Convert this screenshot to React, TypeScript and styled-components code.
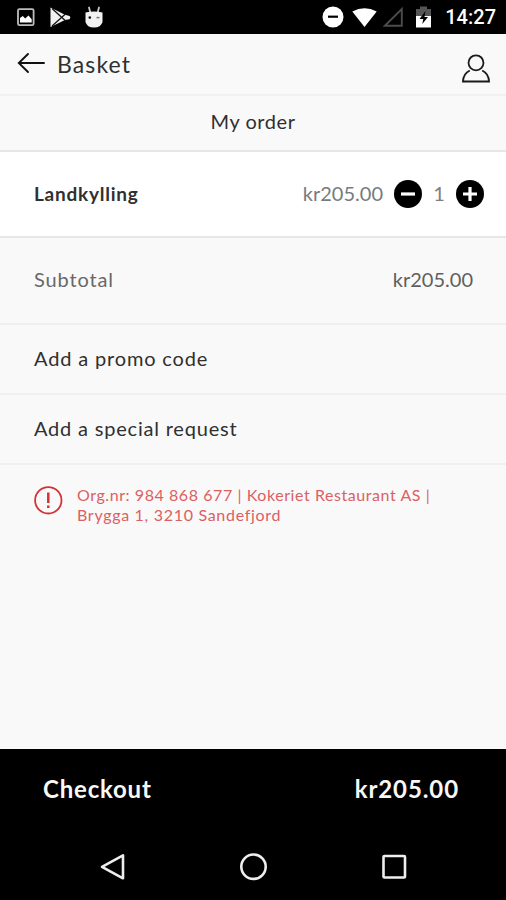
import React from "react";
import styled, { createGlobalStyle } from "styled-components";

const GlobalStyle = createGlobalStyle`
  * { box-sizing: border-box; }
  body { margin: 0; background: #f9f9f9; }
`;

const Screen = styled.div`
  width: 506px;
  height: 900px;
  display: flex;
  flex-direction: column;
  background: #f9f9f9;
  color: #303030;
  font-family: Lato, "Open Sans", sans-serif;
  overflow: hidden;
`;

const StatusBar = styled.div`
  height: 34px;
  flex: none;
  display: flex;
  align-items: center;
  justify-content: space-between;
  background: #000;
  padding: 0 10px 0 16px;
`;

const Notifications = styled.div`
  display: flex;
  align-items: center;
  gap: 14px;
  padding-bottom: 1px;
`;

const Indicators = styled.div`
  display: flex;
  align-items: center;
`;

const Clock = styled.span`
  margin: 1px 0 0 14px;
  color: #fff;
  font: 500 20px/33px Roboto, sans-serif;
`;

const Icon = styled.svg`
  display: block;
  flex: none;
`;

const Wifi = styled(Icon)`
  margin: 0 6px 0 8px;
`;

const Battery = styled(Icon)`
  margin-left: 13px;
`;

const Header = styled.header`
  height: 62px;
  flex: none;
  display: flex;
  align-items: center;
  padding: 0 15px 2px 17px;
  border-bottom: 2px solid #f1f1f1;
`;

const IconButton = styled.button`
  border: 0;
  padding: 0;
  background: none;
`;

const AccountButton = styled(IconButton)`
  margin-left: auto;
  padding-top: 11px;
`;

const Label = styled.span<{ $size?: number; $spacing?: number; $weight?: number; $color?: string }>`
  font-size: ${(p) => p.$size ?? 20}px;
  letter-spacing: ${(p) => p.$spacing ?? 0}px;
  font-weight: ${(p) => p.$weight ?? 400};
  color: ${(p) => p.$color ?? "inherit"};
  line-height: 28px;
  white-space: nowrap;
`;

const Title = styled(Label)`
  margin: 1px 0 0 12px;
`;

const SectionTitle = styled.div`
  height: 56px;
  flex: none;
  display: flex;
  justify-content: center;
  align-items: center;
  padding-bottom: 4px;
  border-bottom: 2px solid #e7e7e7;
`;

const Row = styled.div<{ $height: number; $lift?: number }>`
  height: ${(p) => p.$height}px;
  flex: none;
  display: flex;
  align-items: center;
  justify-content: space-between;
  padding: 0 33px ${(p) => p.$lift ?? 2}px 34px;
  border-bottom: 2px solid #f0f0f0;
`;

const ItemRow = styled(Row)`
  padding: 0 22px 0 34px;
  background: #fff;
  border-bottom-color: #e7e7e7;
`;

const Stepper = styled.div`
  display: flex;
  align-items: center;
`;

const Price = styled(Label)`
  margin-right: 11px;
  padding-bottom: 2px;
`;

const Quantity = styled(Label)`
  width: 34px;
  padding-bottom: 2px;
  text-align: center;
`;

const RoundButton = styled.button`
  border: 0;
  padding: 0;
  width: 28px;
  height: 28px;
  border-radius: 50%;
  background: #000;
`;

const Notice = styled.div`
  display: flex;
  flex: 1;
  align-items: flex-start;
  padding: 20px 34px 0;
  gap: 14px;
  color: #dc6063;
`;

const NoticeText = styled.p`
  margin: 0;
  font-size: 16px;
  line-height: 20px;
  white-space: nowrap;
`;

const NoticeLine = styled.span<{ $spacing: number }>`
  display: block;
  letter-spacing: ${(p) => p.$spacing}px;
`;

const Checkout = styled.div`
  height: 84px;
  flex: none;
  display: flex;
  justify-content: space-between;
  align-items: center;
  padding: 0 47px 4px 43px;
  background: #000;
  color: #f8f8f8;
`;

const NavBar = styled.nav`
  height: 67px;
  flex: none;
  display: flex;
  justify-content: center;
  gap: 112px;
  align-items: center;
  background: #000;
`;

export default function App() {
  return (
    <Screen>
      <GlobalStyle />
      <StatusBar>
        <Notifications>
          <Icon width="20" height="22" viewBox="0 0 20 22">
            <rect x="2" y="3.2" width="15.6" height="16" rx="1.5" fill="none" stroke="#bdbdbd" strokeWidth="1.8" />
            <path d="M4 16.5V12l2.8-2 2.4 2.4 3.3-2.9 3.2 3.7v3.3z" fill="#fff" />
          </Icon>
          <Icon width="21" height="22" viewBox="0 0 21 22">
            <path d="M.5 1.5 15 8.8l4.5 1.2q1.6 1.6 0 3.2L15 14 .5 21z" fill="#f2f2f2" />
            <path d="M2 2.5 16 15.2M2 20 16 7.6" stroke="#111" strokeWidth="1.3" />
          </Icon>
          <Icon width="18" height="24" viewBox="0 0 18 24">
            <path d="M4 2.5 5.2 7M14 2.5 12.8 7" stroke="#ccc" strokeWidth="1.8" strokeLinecap="round" />
            <path d="M.5 7.5Q9 5.5 17.5 7.500V17Q16 22.5 9 22.5T.5 17z" fill="#f1f1f1" />
            <circle cx="4.8" cy="12.6" r="1.3" fill="#111" />
            <path d="M11.5 12.6h3" stroke="#777" strokeWidth="1.5" />
          </Icon>
        </Notifications>
        <Indicators>
          <Icon width="22" height="22" viewBox="0 0 22 22">
            <circle cx="11" cy="11" r="10.5" fill="#fff" />
            <path d="M6 10.7h10" stroke="#000" strokeWidth="2.2" />
          </Icon>
          <Wifi width="25" height="22" viewBox="0 0 25 22">
            <path d="M.3 5.500Q12.500-1 24.700 5.500L12.500 21z" fill="#fff" />
          </Wifi>
          <Icon width="20" height="22" viewBox="0 0 20 22">
            <path d="M18.800 3v16.700H1.800z" fill="none" stroke="#4c4c4c" strokeWidth="1.9" />
          </Icon>
          <Battery width="15" height="22" viewBox="0 0 15 22">
            <path d="M0 3h4V.5h7V3h4v7H0z" fill="#555" />
            <path d="M0 10h15v11.500H0z" fill="#fff" />
            <path d="M9.500 5 3.500 13h3.800l-1 5L12 11H8.500z" fill="#000" />
          </Battery>
          <Clock>14:27</Clock>
        </Indicators>
      </StatusBar>

      <Header>
        <IconButton aria-label="Back">
          <Icon width="28" height="22" viewBox="0 0 28 22">
            <path d="M27 11H2M11 2 1.800 11 11 20" fill="none" stroke="#111" strokeWidth="1.9" strokeLinecap="round" />
          </Icon>
        </IconButton>
        <Title $size={23} $spacing={1.1}>Basket</Title>
        <AccountButton aria-label="Account">
          <Icon width="30" height="30" viewBox="0 0 30 30">
            <circle cx="15" cy="8.800" r="7.500" fill="none" stroke="#1b1b1b" strokeWidth="1.8" />
            <path d="M8.800 16.500C4.500 18.500 2.200 22.500 2 27.500H28C27.800 22.500 25.500 18.500 21.200 16.500" fill="none" stroke="#1b1b1b" strokeWidth="1.9" />
          </Icon>
        </AccountButton>
      </Header>

      <SectionTitle><Label $spacing={0.55}>My order</Label></SectionTitle>

      <ItemRow $height={86}>
        <Label $weight={700} $size={19} $spacing={0.75}>Landkylling</Label>
        <Stepper>
          <Price $color="#777b80">kr205.00</Price>
          <RoundButton aria-label="Remove one">
            <Icon width="28" height="28" viewBox="0 0 28 28">
              <path d="M7 14h14" stroke="#fff" strokeWidth="3.2" />
            </Icon>
          </RoundButton>
          <Quantity $color="#808080">1</Quantity>
          <RoundButton aria-label="Add one">
            <Icon width="28" height="28" viewBox="0 0 28 28">
              <path d="M7 14h14M14 7v14" stroke="#fff" strokeWidth="3.2" />
            </Icon>
          </RoundButton>
        </Stepper>
      </ItemRow>
      <Row $height={87} $lift={4}>
        <Label $color="#686868" $spacing={0.85}>Subtotal</Label>
        <Label $color="#606060">kr205.00</Label>
      </Row>
      <Row $height={70}><Label $spacing={0.84}>Add a promo code</Label></Row>
      <Row $height={70}><Label $spacing={0.8}>Add a special request</Label></Row>

      <Notice>
        <Icon width="29" height="30" viewBox="0 0 29 30">
          <circle cx="14.3" cy="15.3" r="13.2" fill="none" stroke="#d23338" strokeWidth="1.8" />
          <path d="M14.3 7.500v10.500M14.300 20.500v2.400" stroke="#d23338" strokeWidth="2.5" />
        </Icon>
        <NoticeText>
          <NoticeLine $spacing={0.57}>Org.nr: 984 868 677 | Kokeriet Restaurant AS |</NoticeLine>
          <NoticeLine $spacing={0.7}>Brygga 1, 3210 Sandefjord</NoticeLine>
        </NoticeText>
      </Notice>

      <Checkout>
        <Label $size={24} $weight={700} $spacing={0.8}>Checkout</Label>
        <Label $size={24} $weight={700} $spacing={0.9}>kr205.00</Label>
      </Checkout>
      <NavBar>
        <Icon width="28" height="30" viewBox="0 0 28 30">
          <path d="M25 3.300v23L4 14.800z" fill="none" stroke="#eee" strokeWidth="2.6" strokeLinejoin="round" />
        </Icon>
        <Icon width="30" height="30" viewBox="0 0 30 30">
          <circle cx="15.500" cy="14.700" r="12.200" fill="none" stroke="#eee" strokeWidth="2.6" />
        </Icon>
        <Icon width="28" height="30" viewBox="0 0 28 30">
          <rect x="3.500" y="4" width="21.500" height="21.500" rx="1" fill="none" stroke="#eee" strokeWidth="2.6" />
        </Icon>
      </NavBar>
    </Screen>
  );
}
